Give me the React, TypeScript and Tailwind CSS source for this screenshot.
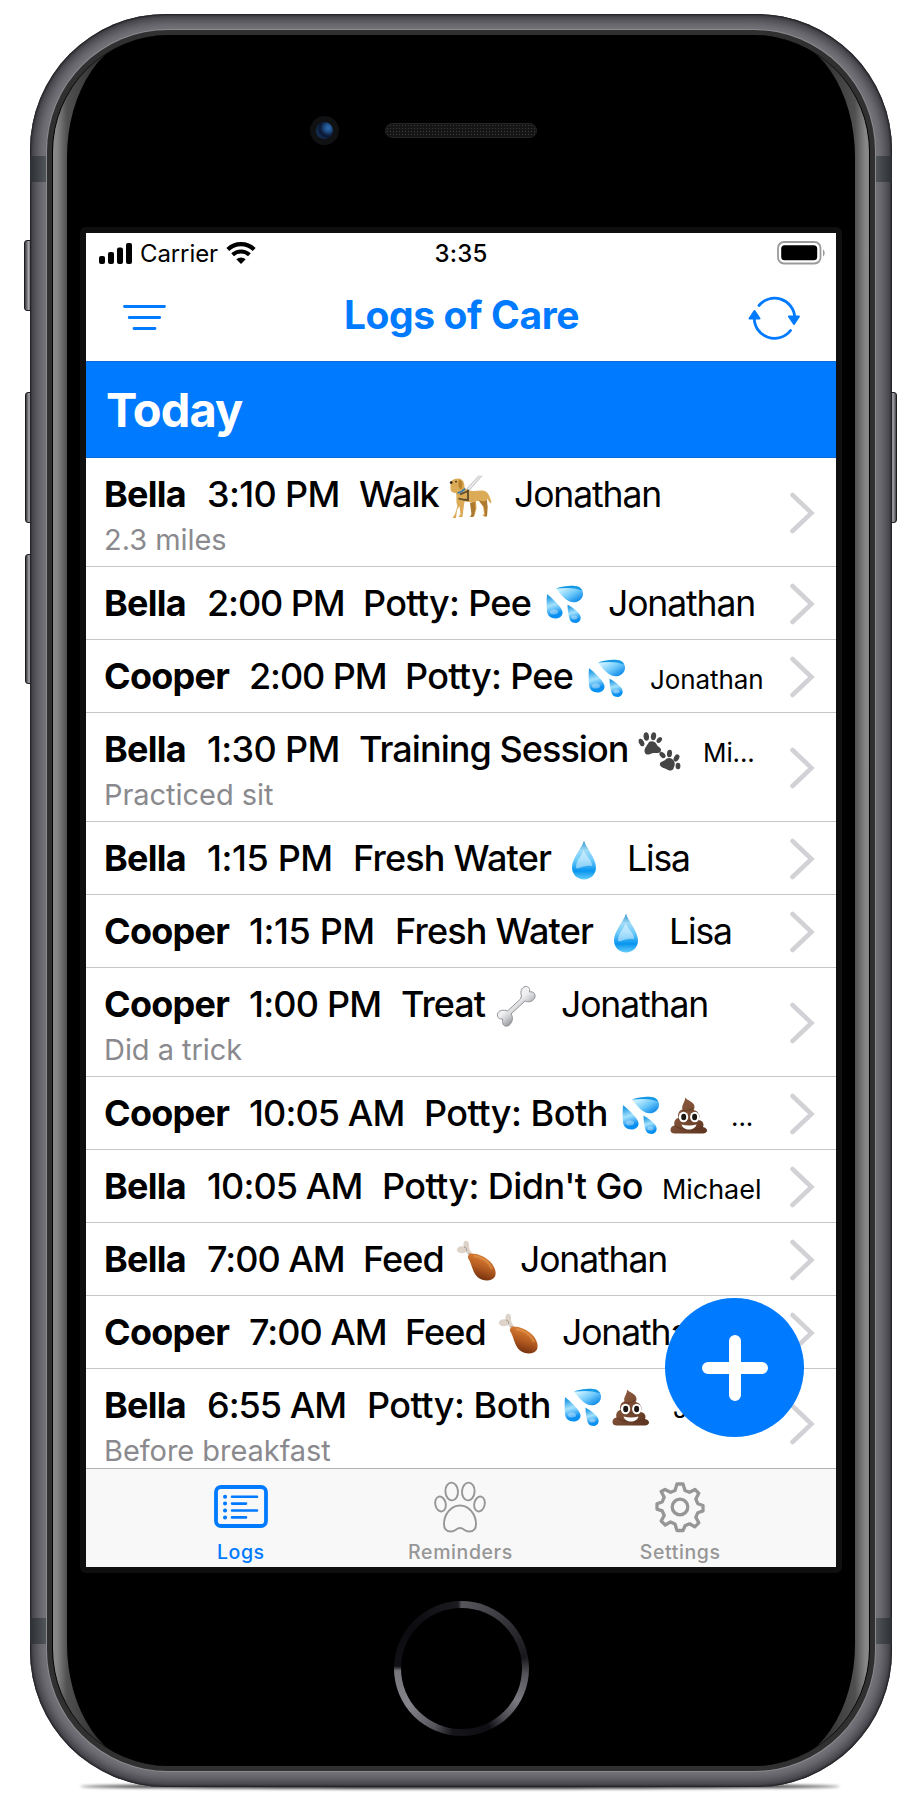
import React from "react";

function Dog() {
  return (
    <svg className="h-[44px] w-[44px]" viewBox="0 0 44 44">
      <path d="M34 1.500 18 19.500M31.500 1.500 17 17" stroke="#cfcfd2" strokeWidth="1.300" />
      <path
        d="M2.500 8.500c.5-2 2.500-3 4.500-3.500 4-1.500 8 0 9 4 .5 2 0 4 1.500 6 3 1.500 6 2 9 2 5-.5 9-1 12 1 2.500 2 3.500 6 5 10l-1 1.500-3.500-5c0 4-.5 6 .5 8l-.5 9.500h-4.500l1.500-2.500-1-7-4-5.500-3 0 .5 7-2 8h-4l1.500-2.500.5-7-1-4-7-1-1 7-1 8.500h-4l2-3-1-8-2.500 4-1 8H4.500l2.500-4 2.500-8c-2-5-.5-9-1.500-13-2.500 0-5.500-1-5.500-4.500z"
        fill="#dcab57"
      />
      <path d="M11.500 5.500c3.500 1 3.500 8 1.500 10-3-2-3.500-6-1.500-10z" fill="#b9822f" />
      <path d="M31 26c3 2 6 1.500 8 0l.5 7-.5 9.500h-3l1-2.500-1-7-4-5zM22 29l5-1 .5 7-2 8H22l1.500-2.500z" fill="#ad782f" />
      <path d="M12 20.500 20 17M10.500 24.500c3 1 6 1.500 9.500 1.500V15.500" stroke="#5d4a2b" strokeWidth="1.800" fill="none" />
      <path d="M9.500 19c3-.5 6-2.500 7.500-4.500" stroke="#357bb5" strokeWidth="1.700" fill="none" />
      <circle cx="3.200" cy="8.600" r="1.400" fill="#33241a" />
      <circle cx="8" cy="7.600" r="0.900" fill="#33241a" />
    </svg>
  );
}

function Drops() {
  return (
    <svg className="h-[40px] w-[40px]" viewBox="0 0 40 40">
      <defs>
        <linearGradient id="dropA" x1="0" y1="0" x2="1" y2="1">
          <stop offset="0.200" stopColor="#c9f0ff" />
          <stop offset="0.550" stopColor="#6cc8fa" />
          <stop offset="0.900" stopColor="#0a86e8" />
        </linearGradient>
        <linearGradient id="dropB" x1="0.300" y1="0" x2="0.500" y2="1">
          <stop offset="0.100" stopColor="#2b9fe6" />
          <stop offset="0.450" stopColor="#a5e2fd" />
          <stop offset="0.850" stopColor="#0a90f0" />
        </linearGradient>
      </defs>
      <path d="M11 3.500C19 .5 28 0 33 1.500c4 1.500 6 6 4.500 10-2 5-8 7-13 5C20 14.500 15 9 11 3.500z" fill="url(#dropA)" />
      <path d="M11 3.500C19 .5 28 0 33 1.500c2 1 3 1.500 4 4-7-3-15-3-26-2z" fill="#1599e4" />
      <path d="M2 9c5 4 15 13 15.500 18 .3 4-3 6.500-7 6.500-5 0-8-3-8.500-7C1.500 20 1.500 14 2 9z" fill="url(#dropB)" />
      <path d="M22.500 19.500c5 3 12 7.500 13 12 .8 4-2 6.500-5 6.500-4 0-6-3-6.500-6-.8-4-1.500-8-1.500-12.500z" fill="url(#dropB)" />
      <ellipse cx="9" cy="27" rx="4" ry="2.500" fill="#fff" opacity="0.350" />
      <ellipse cx="29.500" cy="32.500" rx="3" ry="2" fill="#fff" opacity="0.350" />
    </svg>
  );
}

function Drop() {
  return (
    <svg className="h-[40px] w-[26px]" viewBox="0 0 26 40">
      <defs>
        <linearGradient id="drop" x1="0" y1="0" x2="0" y2="1">
          <stop offset="0" stopColor="#2d8fc8" />
          <stop offset="0.250" stopColor="#a0dcf7" />
          <stop offset="0.500" stopColor="#6ccafa" />
          <stop offset="0.780" stopColor="#0795ef" />
          <stop offset="1" stopColor="#67cdfb" />
        </linearGradient>
      </defs>
      <path d="M13 .5C15 8 25 18 25 27.500c0 7-5.500 12-12 12s-12-5-12-12C1 18 11 8 13 .5z" fill="url(#drop)" />
      <path d="M12.500 9C12 15 5 20 5 27c0 4 8-3 16-1C21 19 13.500 15 12.500 9z" fill="#fff" opacity="0.450" />
    </svg>
  );
}

function Paws() {
  return (
    <svg className="h-[40px] w-[43px]" viewBox="0 0 43 40" fill="#454545">
      <path d="M11 10c3-2 7 0 8 3 1 2 4 2 4 5 0 4-5 3-8 3-3 1-6 3-8 0-2-4 2-7 4-11z" />
      <ellipse cx="3.500" cy="10.500" rx="2.500" ry="4" transform="rotate(-25 3.500 10.500)" />
      <ellipse cx="8.300" cy="4.500" rx="2.700" ry="4.200" transform="rotate(-8 8.300 4.500)" />
      <ellipse cx="15.500" cy="4.300" rx="2.600" ry="4" transform="rotate(10 15.500 4.300)" />
      <ellipse cx="21.300" cy="8" rx="2.200" ry="3.300" transform="rotate(40 21.300 8)" />
      <path d="M28 27c3-2 6-1 8 2 1 2 1 4 0 6-1 4-3 4-6 3-3-2-7-2-8-5-1-4 4-3 6-6z" />
      <ellipse cx="24.500" cy="23" rx="2.300" ry="3.600" transform="rotate(-45 24.500 23)" />
      <ellipse cx="31.500" cy="21.500" rx="2.500" ry="3.800" transform="rotate(5 31.500 21.500)" />
      <ellipse cx="38.500" cy="26" rx="2.500" ry="3.800" transform="rotate(30 38.500 26)" />
      <ellipse cx="40" cy="34" rx="2.400" ry="3.200" />
    </svg>
  );
}

function Bone() {
  return (
    <svg className="h-[42px] w-[40px]" viewBox="0 0 40 42">
      <defs>
        <linearGradient id="bone" x1="0.300" y1="0.300" x2="0.700" y2="0.800">
          <stop offset="0.300" stopColor="#f0f0f2" />
          <stop offset="0.550" stopColor="#cfd0d3" />
          <stop offset="1" stopColor="#77787c" />
        </linearGradient>
      </defs>
      <path
        d="M25.500 11c-2-5 1-10 5-9.500 3 .5 3.500 3 3 5.500 4-1 6 2 5.500 5-.8 4-6 6-10 4L15 29c2 3 2 6 0 9-2 4-7 4-8 1-.7-2-.4-3.500-.4-5C3 34.500 1 32 1.500 29c1-4 6-4.500 10-3l13-12z"
        fill="url(#bone)"
        stroke="#939498"
        strokeWidth="1"
      />
    </svg>
  );
}

function Poop() {
  return (
    <svg className="h-[37px] w-[38px]" viewBox="0 0 38 37">
      <defs>
        <linearGradient id="poop" x1="0" y1="0" x2="1" y2="1">
          <stop offset="0.200" stopColor="#8a5a3e" />
          <stop offset="1" stopColor="#5c331f" />
        </linearGradient>
      </defs>
      <path
        d="M15 .5c2 3 9 4 9.500 9 0 1.500-.5 3-1 3.500 3 .5 6 3 6 6 0 2-.5 3-1 4 3 .5 5 2 5 5 0 1-.3 1.500-.6 2 2.500.5 4.100 1.500 4.100 3.500C37 36 34 36.500 31 36.500H7c-4 0-6.500-.5-6.500-3.500 0-2.500 1.500-4 4-4.500-1-4 1-7 4-7.500-1.500-5 1.500-8 4-8.500C11 8 15.500 5 15 .5z"
        fill="url(#poop)"
      />
      <path d="M12 13c4 2 9 0 11-2M8 22c7 3 15 2 20 0M5 29c8 5 20 5 28 1" stroke="#4f2b1a" strokeWidth="1" fill="none" opacity="0.600" />
      <ellipse cx="13.500" cy="20" rx="4.700" ry="5.300" fill="#fff" />
      <ellipse cx="24.800" cy="20" rx="4.700" ry="5.300" fill="#fff" />
      <ellipse cx="13.700" cy="20" rx="2.500" ry="3.200" fill="#1d1512" />
      <ellipse cx="24.600" cy="20" rx="2.500" ry="3.200" fill="#1d1512" />
      <path d="M11.500 27.500c5 1.300 10 1.300 15 0-1 3.500-4 5-7.500 5s-6.500-1.500-7.500-5z" fill="#fff" />
    </svg>
  );
}

function Drumstick() {
  return (
    <svg className="h-[42px] w-[41px]" viewBox="0 0 41 42">
      <defs>
        <linearGradient id="leg" x1="0.700" y1="0.100" x2="0.400" y2="1">
          <stop offset="0.150" stopColor="#d1762f" />
          <stop offset="0.500" stopColor="#b25a20" />
          <stop offset="1" stopColor="#6e2c0c" />
        </linearGradient>
      </defs>
      <path d="M7.500 6.500C7 3 8 .8 10 .7c2.500 0 3.500 3 3 6 0 2 1 4 4 7.500L14 17l-4-5c-3 2-8 1.500-9-1.500C.3 7.500 4 5.500 7.500 6.500z" fill="#ddd3c8" />
      <path d="M8 7c2 0 3 2 2.500 4M12.500 13l2 2" stroke="#a2958a" strokeWidth="1" fill="none" />
      <path d="M15 13.500c7 0 14 3 19 8 4 4 7 10 5 15-3 5.500-12 5-17 1-6-5-6-14-10-19.500-.5-2 1-4.500 3-4.500z" fill="url(#leg)" />
      <path d="M18 16c8 1 15 6 18 13" stroke="#e39a55" strokeWidth="2.500" fill="none" opacity="0.550" />
    </svg>
  );
}

type Row = {
  cols: string;
  name: string;
  time: string;
  timeTracking: string;
  action: string;
  actionTracking: string;
  icon: React.ReactNode;
  who: string;
  whoSize?: string;
  note?: string;
};

const both = (
  <span className="flex items-end gap-[9px]">
    <Drops />
    <span className="pb-[2px]"><Poop /></span>
  </span>
);

const small = "pt-[3px] text-[26px] tracking-[-0.1px]";
const medium = "pt-[3px] text-[27px] tracking-[-0.05px]";

const rows: Row[] = [
  { cols: "grid-cols-[103px_152px_89px_66px_1fr]", name: "Bella", time: "3:10 PM", timeTracking: "tracking-[-0.65px]", action: "Walk", actionTracking: "tracking-[-1.1px]", icon: <Dog />, who: "Jonathan", note: "2.3 miles" },
  { cols: "grid-cols-[103px_156px_182px_63px_1fr]", name: "Bella", time: "2:00 PM", timeTracking: "tracking-[-1.1px]", action: "Potty: Pee", actionTracking: "tracking-[-0.7px]", icon: <Drops />, who: "Jonathan" },
  { cols: "grid-cols-[145px_156px_182px_63px_1fr]", name: "Cooper", time: "2:00 PM", timeTracking: "tracking-[-1.1px]", action: "Potty: Pee", actionTracking: "tracking-[-0.7px]", icon: <Drops />, who: "Jonathan", whoSize: small },
  { cols: "grid-cols-[103px_152px_279px_65px_1fr]", name: "Bella", time: "1:30 PM", timeTracking: "tracking-[-0.65px]", action: "Training Session", actionTracking: "tracking-[-0.95px]", icon: <Paws />, who: "Mi...", whoSize: small, note: "Practiced sit" },
  { cols: "grid-cols-[103px_146px_218px_56px_1fr]", name: "Bella", time: "1:15 PM", timeTracking: "tracking-[-0.4px]", action: "Fresh Water", actionTracking: "tracking-[-0.8px]", icon: <Drop />, who: "Lisa" },
  { cols: "grid-cols-[145px_146px_218px_56px_1fr]", name: "Cooper", time: "1:15 PM", timeTracking: "tracking-[-0.4px]", action: "Fresh Water", actionTracking: "tracking-[-0.8px]", icon: <Drop />, who: "Lisa" },
  { cols: "grid-cols-[145px_152px_95px_65px_1fr]", name: "Cooper", time: "1:00 PM", timeTracking: "tracking-[-0.8px]", action: "Treat", actionTracking: "tracking-[-1px]", icon: <Bone />, who: "Jonathan", note: "Did a trick" },
  { cols: "grid-cols-[145px_175px_197px_110px_1fr]", name: "Cooper", time: "10:05 AM", timeTracking: "tracking-[-0.9px]", action: "Potty: Both", actionTracking: "tracking-[-0.5px]", icon: both, who: "...", whoSize: small },
  { cols: "grid-cols-[103px_175px_258px_22px_1fr]", name: "Bella", time: "10:05 AM", timeTracking: "tracking-[-0.9px]", action: "Potty: Didn't Go", actionTracking: "tracking-[-0.6px]", icon: null, who: "Michael", whoSize: medium },
  { cols: "grid-cols-[103px_156px_93px_64px_1fr]", name: "Bella", time: "7:00 AM", timeTracking: "tracking-[-1px]", action: "Feed", actionTracking: "tracking-[-0.9px]", icon: <Drumstick />, who: "Jonathan" },
  { cols: "grid-cols-[145px_156px_93px_64px_1fr]", name: "Cooper", time: "7:00 AM", timeTracking: "tracking-[-1px]", action: "Feed", actionTracking: "tracking-[-0.9px]", icon: <Drumstick />, who: "Jonathan" },
  { cols: "grid-cols-[103px_160px_196px_110px_1fr]", name: "Bella", time: "6:55 AM", timeTracking: "tracking-[-1px]", action: "Potty: Both", actionTracking: "tracking-[-0.5px]", icon: both, who: "Jo...", whoSize: small, note: "Before breakfast" },
];

function LogRow({ row }: { row: Row }) {
  return (
    <div className={"flex shrink-0 border-b border-[#c6c6c8] pl-[18px] " + (row.note ? "h-[109px]" : "h-[73px]")}>
      <div className="w-[686px] whitespace-nowrap">
        <div className={"grid h-[73px] text-[36px] leading-[73px] text-black " + row.cols}>
          <span className="font-bold tracking-[-0.75px]">{row.name}</span>
          <span className={"font-medium " + row.timeTracking}>{row.time}</span>
          <span className={"font-medium " + row.actionTracking}>{row.action}</span>
          <span className="flex items-center pt-[2px]">{row.icon}</span>
          <span className={row.whoSize ?? "text-[35.5px] tracking-[-1.1px]"}>{row.who}</span>
        </div>
        {row.note && (
          <div className="-mt-[9px] text-[29px] leading-9 tracking-[-0.05px] text-[#8a8a8e]">{row.note}</div>
        )}
      </div>
      <svg className="mt-[2px] h-[42px] w-[26px] self-center" viewBox="0 0 26 42" fill="none">
        <path d="M2.500 3 21.500 21 2.500 39" stroke="#d1d1d6" strokeWidth="4.500" strokeLinecap="round" />
      </svg>
    </div>
  );
}

function StatusBar() {
  return (
    <div className="grid h-10 shrink-0 grid-cols-3 items-center px-[13px]">
      <div className="flex items-center">
        <svg className="h-[21px] w-[34px]" viewBox="0 0 34 21">
          <rect x="0" y="13" width="6" height="8" rx="2" />
          <rect x="9" y="9" width="6" height="12" rx="2" />
          <rect x="18" y="4.500" width="6" height="16.500" rx="2" />
          <rect x="27" y="0" width="6" height="21" rx="2" />
        </svg>
        <span className="ml-[7px] w-[86px] pt-px text-[24px] leading-[30px] tracking-[-0.1px]">Carrier</span>
        <svg className="h-[22px] w-[30px]" viewBox="0 0 30 22" fill="none" stroke="#000">
          <path d="M1.800 7.400a19.200 19.200 0 0 1 26.400 0" strokeWidth="4.200" />
          <path d="M6.600 12.800a12.400 12.400 0 0 1 16.800 0" strokeWidth="4" />
          <path d="M10.300 17.300a7 7 0 0 1 9.400 0L15 22z" fill="#000" stroke="none" />
        </svg>
      </div>
      <div className="pt-px text-center text-[24px] font-medium leading-[30px] tracking-[0.2px]">3:35</div>
      <svg className="-mr-[3px] h-[24px] w-[49px] justify-self-end" viewBox="0 0 49 24">
        <rect x="1" y="1" width="42.500" height="21.500" rx="6" fill="none" stroke="#9a9a9a" strokeWidth="1.800" />
        <rect x="4.200" y="4.200" width="36" height="15" rx="3.500" />
        <path d="M46 8.500c2.200 1 2.200 6 0 7z" fill="#9a9a9a" />
      </svg>
    </div>
  );
}

function NavBar() {
  return (
    <div className="flex h-[88px] shrink-0 items-center justify-between pl-[36px] pr-[35px]">
      <div className="w-[53px]">
        <svg className="h-[28px] w-[45px]" viewBox="0 0 45 28" stroke="#007aff" strokeWidth="2.800" strokeLinecap="round">
          <path d="M2.500 3.500h40M7.200 14.500h30.500M12 25.500h21" />
        </svg>
      </div>
      <div className="pb-[5px] text-[39px] font-bold leading-[46px] tracking-[-0.4px] text-[#007aff]">Logs of Care</div>
      <svg className="h-[46px] w-[53px]" viewBox="0 0 53 46" fill="none" stroke="#007aff" strokeWidth="2.800" strokeLinecap="round">
        <path d="M11 11.500A20.200 20.200 0 0 1 46.700 23" />
        <path d="M42.500 36.500A20.200 20.200 0 0 1 6.300 24" />
        <path d="M40.900 22.500h10L46 30z" fill="#007aff" strokeWidth="2" strokeLinejoin="round" />
        <path d="M1.500 24.500h10L6.500 17z" fill="#007aff" strokeWidth="2" strokeLinejoin="round" />
      </svg>
    </div>
  );
}

const tab = "flex flex-col items-center justify-between pb-[3px] pt-[12px]";

function TabBar() {
  return (
    <div className="grid h-[99px] shrink-0 grid-cols-3 border-t border-[#b2b2b2] bg-[#f8f8f8] pl-[45px] pr-[46px] text-[19.5px] font-medium leading-6 tracking-[0.6px] text-[#969696]">
      <div className={tab + " text-[#007aff]"}>
        <svg className="mt-[4px] h-[44px] w-[54px]" viewBox="0 0 54 44" fill="none" stroke="currentColor" strokeLinecap="round">
          <rect x="2" y="2" width="50" height="39" rx="5" strokeWidth="3.800" />
          <path d="M18 11.700h25M18 18.600h14M18 25.500h25M18 32.400h14" strokeWidth="2.600" />
          <path d="M11 11.700h.1M11 18.600h.1M11 25.500h.1M11 32.400h.1" strokeWidth="4" />
        </svg>
        <span>Logs</span>
      </div>
      <div className={tab}>
        <svg className="h-[52px] w-[52px]" viewBox="0 0 52 52" fill="none" stroke="currentColor" strokeWidth="1.900">
          <ellipse cx="17.700" cy="10.500" rx="6.300" ry="8.900" transform="rotate(-4 17.700 10.500)" />
          <ellipse cx="34.300" cy="10.500" rx="6.300" ry="8.900" transform="rotate(4 34.300 10.500)" />
          <ellipse cx="6.500" cy="23" rx="5.200" ry="7.600" transform="rotate(-12 6.500 23)" />
          <ellipse cx="45.500" cy="23" rx="5.200" ry="7.600" transform="rotate(12 45.500 23)" />
          <path d="M26 24.500c-9 0-16 9-16 18.500 0 5 3 7.500 7 7.500 4.500 0 5-3.500 9-3.500s4.500 3.500 9 3.500c4 0 7-2.500 7-7.500 0-9.500-7-18.500-16-18.500z" />
        </svg>
        <span>Reminders</span>
      </div>
      <div className={tab}>
        <svg className="h-[52px] w-[52px]" viewBox="0 0 52 52" fill="none" stroke="currentColor" strokeWidth="3.300" strokeLinejoin="round">
          <path d="M23 3h6l2 6.500 4.500 1.800 5.500-2.800 3.800 3.800-3 5.700 2 4.700 5.200 1.800v5.400l-5.200 1.800-2 4.600 3 5.500-4 4-5.300-3-4.500 2L29 49.500h-6L21 43l-4.500-2-5.300 3-4-4 3-5.500-2-4.600L3 28.100v-5.400l5.200-1.800 2-4.700-3-5.700L11 8.500l5.500 2.800L21 9.500z" />
          <circle cx="26" cy="26" r="7.800" />
        </svg>
        <span>Settings</span>
      </div>
    </div>
  );
}

function Screen() {
  return (
    <div className="relative flex h-[1334px] w-[750px] flex-col bg-white">
      <StatusBar />
      <NavBar />
      <div className="flex h-[97px] shrink-0 items-center border-y border-[#0a6bd6] bg-[#007aff] pl-[20px] pt-px text-[47px] font-bold leading-[56px] tracking-[-0.9px] text-white">
        Today
      </div>
      <div className="flex min-h-0 flex-1 flex-col overflow-hidden">
        {rows.map((row, i) => (
          <LogRow key={i} row={row} />
        ))}
      </div>
      <TabBar />
      <button className="absolute left-[579px] top-[1065px] flex h-[139px] w-[139px] items-center justify-center rounded-full bg-[#007aff]">
        <svg className="h-[68px] w-[68px]" viewBox="0 0 68 68" stroke="#fff" strokeWidth="12" strokeLinecap="round">
          <path d="M34 7v54M7 34h54" />
        </svg>
      </button>
    </div>
  );
}

const sideKey = "absolute border border-[#1c1c20] bg-linear-to-r from-[#3a3a3f] via-[#a5a5aa] to-[#47474c]";
const antenna = "absolute left-0 h-[26px] w-full bg-[linear-gradient(90deg,#2c2f33_0,#53585c_17px,#53585c_845px,#2c2f33_862px)]";

export default function App() {
  return (
    <div className="relative h-[1800px] w-[920px] overflow-hidden bg-white pl-[30px] pt-[14px] font-['Inter','Liberation_Sans',sans-serif]">
      <div className="absolute left-[80px] top-[1784px] h-[5px] w-[760px] rounded-[50%] bg-black/80 blur-[1.5px]" />
      <div className={sideKey + " left-[24px] top-[240px] h-[71px] w-[9px] rounded-[3px]"} />
      <div className={sideKey + " left-[25px] top-[392px] h-[131px] w-[8px] rounded-[3px]"} />
      <div className={sideKey + " left-[25px] top-[554px] h-[130px] w-[8px] rounded-[3px]"} />
      <div className={sideKey + " left-[889px] top-[392px] h-[131px] w-[8px] rounded-[3px]"} />
      <div className="relative h-[1773px] w-[862px] overflow-hidden rounded-[136px] bg-[#77767c] px-[17px] py-[16px] shadow-[inset_0_0_2px_1px_#1c1c20,inset_0_0_14px_5px_#2c2c32]">
        <div className={antenna + " top-[142px]"} />
        <div className={antenna + " top-[1604px]"} />
        <div className="relative h-[1741px] w-[828px] rounded-[121px] bg-[#303030] p-[5px] shadow-[0_0_0_1px_#8b8a90]">
          <div className="h-[1731px] w-[818px] overflow-hidden rounded-[117px] border-x border-black bg-[linear-gradient(90deg,#8a8a8a_0,#858585_4px,#505050_14px,#222_60px,#222_756px,#505050_802px,#858585_812px,#8a8a8a_816px)] px-[14px]">
            <div className="flex h-full w-[788px] flex-col items-center rounded-[84px/122px] bg-black">
              <div className="flex h-[192px] w-full shrink-0 items-start pl-[243px] pt-[81px]">
                <div className="flex h-[29px] w-[29px] items-center justify-center rounded-full bg-[#101113]">
                  <div className="h-[17px] w-[17px] rounded-full bg-[radial-gradient(circle_at_72%_35%,#2f6fb5_0,#1d4a80_25%,#0a1630_50%,#16365f_80%,#0a1226_100%)]" />
                </div>
                <div className="ml-[46px] mt-[7px] h-[15px] w-[152px] rounded-full border border-[#242424] bg-[#151515] bg-[radial-gradient(circle,#3c3c3c_0.8px,transparent_1px)] bg-size-[3px_3px]" />
              </div>
              <div className="rounded-[6px] border-[6px] border-[#0f0f0f]">
                <Screen />
              </div>
              <div className="mt-[28px] h-[135px] w-[135px] rounded-full bg-[conic-gradient(#57565b_0deg,#4a494f_20deg,#2a2a2f_55deg,#17171c_80deg,#55545a_95deg,#7b7a80_120deg,#4a494f_140deg,#0d0d13_155deg,#15151a_188deg,#56555b_205deg,#85848a_235deg,#77767c_268deg,#101016_272deg,#0b0b10_310deg,#1c1c20_357deg,#57565b_360deg)] p-[7px]">
                <div className="h-full w-full rounded-full bg-black" />
              </div>
            </div>
          </div>
        </div>
      </div>
    </div>
  );
}
